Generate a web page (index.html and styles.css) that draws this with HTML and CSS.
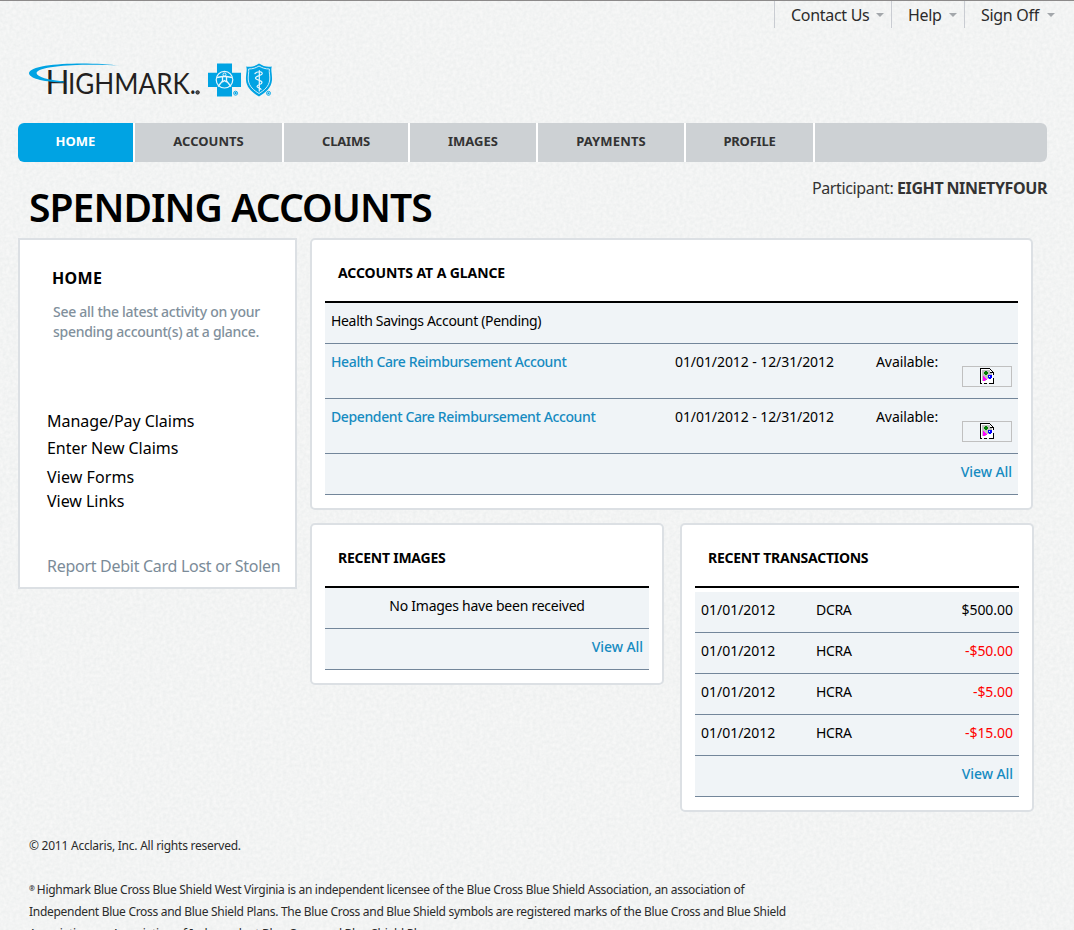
FILE: index.html
```html
<!DOCTYPE html>
<html lang="en">
<head>
<meta charset="utf-8">
<title>Spending Accounts</title>
<link rel="stylesheet" href="styles.css">
</head>
<body>
<svg class="paper" aria-hidden="true">
  <filter id="grain" x="0" y="0" width="100%" height="100%" color-interpolation-filters="sRGB">
    <feTurbulence type="fractalNoise" baseFrequency="0.3" numOctaves="2" seed="4"/>
    <feColorMatrix values="0.06 0 0 0 0.92  0.05 0 0 0 0.93  0.048 0 0 0 0.93  0 0 0 0 1"/>
  </filter>
  <rect width="100%" height="100%" filter="url(#grain)"/>
</svg>
<svg class="defs" aria-hidden="true">
  <symbol id="missing" viewBox="0 0 14 16" shape-rendering="crispEdges">
    <path fill="#fff" d="M1 1h9l3 4v10H1z"/>
    <path fill="#c0c0c0" d="M2 2h8v3h2v3H9v3H6v2H2z"/>
    <path fill="#000" d="M0 0h10v1H1v14h1v1H0zM10 1h1v1h-1zM11 2h1v1h-1zM12 3h1v1h-1zM10 4h4v1h-4zM13 5h1v2h-1zM13 10h1v6h-5v-1h4zM4 15h3v1H4z"/>
    <path fill="#fff" d="M10 2h1v1h1v1h-2z"/>
    <path fill="#008000" d="M5 3h2v1h1v2H7v1H5V6H4V4h1z"/>
    <path fill="#00f" d="M8 7h4v3h-1v1H9v-1H8z"/>
    <path fill="#fff" d="M9 8h1v1H9z"/>
    <path fill="#f0f" d="M3 8h1v1h1v1h1v1h1v1H5v1H3z"/>
  </symbol>
</svg>

<nav class="utility">
  <a class="utility-item">Contact Us<i class="caret"></i></a>
  <a class="utility-item">Help<i class="caret"></i></a>
  <a class="utility-item">Sign Off<i class="caret"></i></a>
</nav>

<div class="page">
  <header class="brand">
    <svg class="logo" width="250" height="40" viewBox="26 60 250 40">
      <g class="word">
        <text x="45.500" y="94" font-size="33" textLength="24" lengthAdjust="spacingAndGlyphs">H</text>
        <text x="68" y="94" font-size="28" textLength="128" lengthAdjust="spacingAndGlyphs">IGHMARK.</text>
      </g>
      <circle cx="197.600" cy="92.400" r="1.700" fill="#555" stroke="#231f20"/>
      <path fill="#00a3e3" d="M120 65.600C90 61.500 29 62.500 29 73.500C30 79 46 82 64 82.500L64 81.500C48 80 37 77 36.500 73C38 64.500 92 63.500 120 65.600z"/>
      <g fill="#00a3e3">
        <path d="M217 63.500h15v9.200h9v14.300h-9v9.500h-15V87h-9V72.700h9z"/>
        <path d="M246.200 66.500C251 67.500 255 66 259 63.500C263 66 267 67.500 271.800 66.500C270.500 70 272.300 74 272 80C271.500 88 265 93 259 96.500C253 93 246.500 88 246 80C245.700 74 247.500 70 246.200 66.500z"/>
      </g>
      <g fill="none" stroke="#e9f6fc">
        <circle cx="224.500" cy="79.700" r="8.300" stroke-width="1.200"/>
        <path stroke-width="1.300" d="M217 77.500l5.500-1h4l5.500 1M222.500 77v4l-4.500 5.500M226.500 77v4l4.500 5.500M222.500 82l2-1.500 2 1.500"/>
        <circle cx="224.500" cy="74.500" r="1.500" stroke-width="1"/>
        <path stroke-width=".9" d="M248.600 69C253 69 256 67.800 259 66C262 67.800 265 69 269.400 69C268.800 72 270.200 76 269.700 80C269 86.500 264 90.500 259 93.500C254 90.500 249 86.500 248.300 80C247.800 76 249.200 72 248.600 69z"/>
        <path stroke-width="1.200" d="M259.300 70.500V91M255 73.500c2-2 6-2.500 7.200-.5c1 2.500-6.700 2.500-6.700 5c0 2.300 6.500 2 6.500 4.500c0 2.200-5 1.800-5 4c0 1.700 4 1 4 3" stroke-linecap="round"/>
      </g>
      <g fill="#f1fafd" stroke="#00a3e3" stroke-width=".9">
        <circle cx="235.600" cy="93.200" r="2"/>
        <circle cx="268.500" cy="93.300" r="2"/>
      </g>
      <g fill="#00a3e3"><circle cx="235.600" cy="93.200" r="1.100"/><circle cx="268.500" cy="93.300" r="1.100"/></g>
    </svg>
  </header>

  <nav class="tabs">
    <a class="tab tab-home">HOME</a>
    <a class="tab tab-accounts">ACCOUNTS</a>
    <a class="tab tab-claims">CLAIMS</a>
    <a class="tab tab-images">IMAGES</a>
    <a class="tab tab-payments">PAYMENTS</a>
    <a class="tab tab-profile">PROFILE</a>
    <span class="tab tab-rest"></span>
  </nav>

  <div class="heading">
    <h1 class="title">SPENDING ACCOUNTS</h1>
    <p class="participant"><span class="participant-label">Participant:</span> <b class="participant-name">EIGHT NINETYFOUR</b></p>
  </div>

  <div class="columns">
    <aside class="sidebar">
      <h2 class="sidebar-title">HOME</h2>
      <p class="sidebar-intro">See all the latest activity on your<br>spending account(s) at a glance.</p>
      <a class="side-link manage">Manage/Pay Claims</a>
      <a class="side-link enter">Enter New Claims</a>
      <a class="side-link forms">View Forms</a>
      <a class="side-link links">View Links</a>
      <a class="side-link report">Report Debit Card Lost or Stolen</a>
    </aside>

    <main class="main">
      <section class="card">
        <h3 class="card-title glance">ACCOUNTS AT A GLANCE</h3>
        <div class="rows">
          <div class="row"><span class="name">Health Savings Account (Pending)</span></div>
          <div class="row tall">
            <a class="name link">Health Care Reimbursement Account</a><span class="dates">01/01/2012 - 12/31/2012</span><span class="available">Available:</span>
            <span class="missing"><svg width="14" height="16"><use href="#missing"/></svg></span>
          </div>
          <div class="row tall">
            <a class="name link">Dependent Care Reimbursement Account</a><span class="dates">01/01/2012 - 12/31/2012</span><span class="available">Available:</span>
            <span class="missing"><svg width="14" height="16"><use href="#missing"/></svg></span>
          </div>
          <div class="row"><a class="view-all">View All</a></div>
        </div>
      </section>

      <div class="pair">
        <section class="card half">
          <h3 class="card-title">RECENT IMAGES</h3>
          <div class="rows">
            <div class="row"><span class="empty">No Images have been received</span></div>
            <div class="row"><a class="view-all">View All</a></div>
          </div>
        </section>
        <section class="card half">
          <h3 class="card-title">RECENT TRANSACTIONS</h3>
          <div class="rows spaced">
            <div class="row"><span class="date">01/01/2012</span><span class="code">DCRA</span><span class="amount">$500.00</span></div>
            <div class="row"><span class="date">01/01/2012</span><span class="code">HCRA</span><span class="amount debit">-$50.00</span></div>
            <div class="row"><span class="date">01/01/2012</span><span class="code">HCRA</span><span class="amount debit">-$5.00</span></div>
            <div class="row"><span class="date">01/01/2012</span><span class="code">HCRA</span><span class="amount debit">-$15.00</span></div>
            <div class="row"><a class="view-all">View All</a></div>
          </div>
        </section>
      </div>
    </main>
  </div>

  <footer class="footer">
    <p class="copyright">© 2011 Acclaris, Inc. All rights reserved.</p>
    <p class="legal"><span class="mark">®</span> Highmark Blue Cross Blue Shield West Virginia is an independent licensee of the Blue Cross Blue Shield Association, an association of<br>Independent Blue Cross and Blue Shield Plans. The Blue Cross and Blue Shield symbols are registered marks of the Blue Cross and Blue Shield<br>Association, an Association of Independent Blue Cross and Blue Shield Plans.</p>
  </footer>
</div>
</body>
</html>
```
FILE: styles.css
```css
* { box-sizing: border-box; }

body {
  margin: 0;
  height: 930px;
  overflow: hidden;
  position: relative;
  border-top: 1px solid #8c8a8a;
  background: #f2f4f4;
  color: #000;
  font-family: "Noto Sans", "Open Sans", sans-serif;
  font-size: 14px;
  line-height: 20px;
}

h1, h2, h3, p { margin: 0; }

.paper { position: absolute; top: 0; left: 0; width: 100%; height: 930px; z-index: -1; }
.defs { position: absolute; width: 0; height: 0; }

/* Utility menu */
.utility {
  display: flex;
  justify-content: flex-end;
  padding-right: 19px;
  height: 27px;
  color: #2b2b2b;
  font-size: 16px;
  line-height: 28px;
  letter-spacing: -0.3px;
}
.utility-item {
  display: flex;
  align-items: center;
  justify-content: space-between;
  border-left: 1px solid #c9ccd2;
  padding: 0 7px 0 16px;
  width: 117px;
}
.utility-item:nth-child(2) { width: 73px; }
.utility-item:nth-child(3) { width: 91px; padding-right: 0; }
.caret {
  border: 4px solid transparent;
  border-top-color: #a3a7ab;
  border-bottom: 0;
}

.page { width: 1029px; margin-left: 18px; }

.brand { padding: 32px 0 0 8px; height: 95px; }
.logo { display: block; }
.word { fill: #231f20; font-family: Lato, sans-serif; font-weight: 400; }

/* Main tabs */
.tabs {
  display: flex;
  gap: 2px;
  height: 39px;
  border-radius: 6px;
  overflow: hidden;
  background: #fff;
}
.tab {
  background: #cdd1d4;
  color: #333;
  font-size: 13px;
  font-weight: 700;
  line-height: 37px;
  text-align: center;
}
.tab-home { width: 115px; background: #00a3e3; color: #fff; }
.tab-accounts { width: 147px; }
.tab-claims { width: 124px; letter-spacing: -0.2px; }
.tab-images { width: 126px; }
.tab-payments { width: 146px; letter-spacing: 0.15px; }
.tab-profile { width: 127px; letter-spacing: -0.2px; }
.tab-rest { flex: 1; }

.heading { display: flex; justify-content: space-between; height: 76px; }
.title {
  padding: 21px 0 0 11px;
  font-size: 39px;
  font-weight: 600;
  line-height: 48px;
  letter-spacing: -0.92px;
  white-space: nowrap;
}
.participant { padding-top: 16px; color: #333; font-size: 16px; white-space: nowrap; word-spacing: -0.5px; }
.participant-label { letter-spacing: -0.36px; }
.participant-name { letter-spacing: -0.4px; }

.columns { display: flex; align-items: flex-start; gap: 13px; }

/* Sidebar */
.sidebar {
  display: flex;
  flex-direction: column;
  width: 279px;
  height: 351px;
  border: 2px solid #dce0e4;
  background: #fff;
  padding: 28px 0 0 27px;
}
.sidebar-title { padding-left: 5px; font-size: 16px; font-weight: 700; letter-spacing: 0.35px; }
.sidebar-intro {
  margin: 14px 0 69px;
  padding-left: 6px;
  color: #81909c;
  font-weight: 500;
  letter-spacing: -0.28px;
}
.side-link { font-size: 16px; letter-spacing: -0.04px; white-space: nowrap; }
.enter { margin-top: 7px; }
.forms { margin-top: 9px; letter-spacing: 0.08px; }
.links { margin-top: 4px; }
.report { margin-top: 45px; color: #7b8b98; letter-spacing: -0.28px; }

/* Cards */
.main { display: flex; flex-direction: column; gap: 13px; width: 724px; }
.card {
  width: 723px;
  border: 2px solid #dce0e4;
  border-radius: 5px;
  background: #fff;
  padding: 0 13px 13px;
}
.pair { display: flex; align-items: flex-start; gap: 16px; }
.half { width: 354px; }
.card-title {
  height: 61px;
  padding: 23px 0 0 13px;
  font-size: 14px;
  font-weight: 700;
  letter-spacing: -0.25px;
}
.glance { letter-spacing: -0.09px; }
.rows { border-top: 2px solid #000; }
.spaced { padding-top: 4px; }
.row {
  display: flex;
  height: 41px;
  padding: 8px 6px 0;
  border-bottom: 1px solid #73869a;
  background: #f0f4f7;
  letter-spacing: -0.33px;
  white-space: nowrap;
}
.tall { height: 55px; }
.name { width: 344px; }
.link, .view-all { color: #168bc1; font-weight: 500; }
.link { letter-spacing: -0.38px; }
.dates { width: 201px; letter-spacing: -0.08px; }
.available { letter-spacing: -0.08px; }
.view-all { margin-left: auto; letter-spacing: -0.08px; }
.empty { margin: auto; margin-top: 0; letter-spacing: -0.25px; }
.missing {
  display: flex;
  align-items: flex-start;
  justify-content: center;
  width: 50px;
  height: 21px;
  margin: 14px 0 0 auto;
  padding-top: 1px;
  border: 1px solid #c0c0c0;
}
.date { width: 115px; letter-spacing: -0.02px; }
.amount { margin-left: auto; letter-spacing: -0.04px; }
.debit { color: #f00; }

/* Footer */
.footer {
  padding: 23px 0 0 11px;
  color: #2b2b2b;
  font-size: 12px;
  line-height: 22px;
  letter-spacing: -0.295px;
  white-space: nowrap;
}
.copyright { letter-spacing: -0.24px; margin-bottom: 22px; }
.legal { height: 44px; }
.mark { display: inline-block; width: 5px; font-size: 7px; line-height: 8px; font-weight: 700; vertical-align: 3px; }
```
